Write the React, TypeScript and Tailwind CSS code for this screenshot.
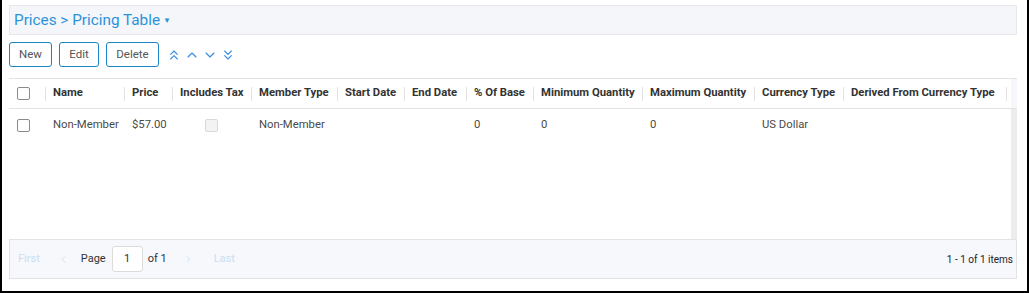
import { ChevronLeft, ChevronRight, ChevronUp, ChevronDown, ChevronsUp, ChevronsDown } from 'lucide-react';

const COLUMNS = [
  { key: 'name', label: 'Name', width: 'w-[79px]' },
  { key: 'price', label: 'Price', width: 'w-[48px]' },
  { key: 'tax', label: 'Includes Tax', width: 'w-[79px]' },
  { key: 'member', label: 'Member Type', width: 'w-[86px]' },
  { key: 'start', label: 'Start Date', width: 'w-[67px]' },
  { key: 'end', label: 'End Date', width: 'w-[62px]' },
  { key: 'base', label: '% Of Base', width: 'w-[67px]' },
  { key: 'min', label: 'Minimum Quantity', width: 'w-[109px]' },
  { key: 'max', label: 'Maximum Quantity', width: 'w-[112px]' },
  { key: 'currency', label: 'Currency Type', width: 'w-[89px]' },
  { key: 'derived', label: 'Derived From Currency Type', width: 'w-[164px]' },
];

const ROW: Record<string, string> = {
  name: 'Non-Member',
  price: '$57.00',
  tax: '',
  member: 'Non-Member',
  start: '',
  end: '',
  base: '0',
  min: '0',
  max: '0',
  currency: 'US Dollar',
  derived: '',
};

const BUTTONS = [
  { label: 'New', width: 'w-[43px]' },
  { label: 'Edit', width: 'w-[40px]' },
  { label: 'Delete', width: 'w-[53px]' },
];

function Checkbox({ disabled }: { disabled?: boolean }) {
  return (
    <span
      className={`block w-[13px] h-[13px] rounded-[2px] border ${
        disabled ? 'border-[#d9d9d9] bg-[#f3f3f3]' : 'border-[#8a8a8a] bg-white'
      }`}
    />
  );
}

export default function App() {
  return (
    <div className="w-[1029px] h-[293px] bg-white border-x-2 border-b-2 border-black pl-[7px] pr-[10px] pt-[5px] font-['Roboto',sans-serif] text-[11.3px] text-[#4a4a4a]">
      {/* Title bar */}
      <div className="h-[30px] flex items-center px-[4px] bg-[#f5f6fa] border border-[#e7e8ec]">
        <span className="text-[15.3px] text-[#2b93dc]">Prices &gt; Pricing Table</span>
        <span className="ml-[3px] mt-[1px] text-[8px] text-[#2b93dc]">▼</span>
      </div>

      {/* Toolbar */}
      <div className="mt-[7px] flex items-center gap-[7px]">
        {BUTTONS.map((b) => (
          <button
            key={b.label}
            className={`${b.width} h-[25px] rounded-[3px] border border-[#1b84c6] bg-white text-[11.5px] text-[#555]`}
          >
            {b.label}
          </button>
        ))}
        <div className="flex items-center gap-[2px] text-[#3b8fe2]">
          <ChevronsUp className="w-[16px] h-[16px]" strokeWidth={1.75} />
          <ChevronUp className="w-[16px] h-[16px]" strokeWidth={1.75} />
          <ChevronDown className="w-[16px] h-[16px]" strokeWidth={1.75} />
          <ChevronsDown className="w-[16px] h-[16px]" strokeWidth={1.75} />
        </div>
      </div>

      {/* Grid */}
      <div className="mt-[11px] border-t border-[#e3e3e3]">
        <div className="h-[30px] flex items-center border-b border-[#e3e3e3] font-bold text-[#333]">
          <div className="w-[36px] h-full flex items-center pl-[8px]">
            <Checkbox />
          </div>
          {COLUMNS.map((c, i) => (
            <div key={c.key} className={`${c.width} h-full flex items-center shrink-0`}>
              <span className="w-px h-[14px] bg-[#e3e3e3]" />
              <span className="pl-[7px] whitespace-nowrap">{c.label}</span>
              {i === COLUMNS.length - 1 && <span className="ml-auto w-px h-[14px] bg-[#e3e3e3]" />}
            </div>
          ))}
          <div className="ml-auto w-[6px] h-full bg-[#f5f7fa]" />
        </div>

        <div className="h-[130px] flex">
          <div className="flex-1">
            <div className="h-[32px] flex items-center">
              <div className="w-[36px] flex items-center pl-[8px]">
                <Checkbox />
              </div>
              {COLUMNS.map((c) => (
                <div key={c.key} className={`${c.width} shrink-0 flex items-center ${c.key === 'tax' ? 'justify-center' : 'pl-[8px]'}`}>
                  {c.key === 'tax' ? <Checkbox disabled /> : <span className="whitespace-nowrap">{ROW[c.key]}</span>}
                </div>
              ))}
            </div>
          </div>
          <div className="w-[6px] h-full bg-[#ececec]" />
        </div>
      </div>

      {/* Pager */}
      <div className="h-[40px] flex items-center bg-[#f6f8fc] border border-[#e3e3e3] text-[11px] text-[#333]">
        <span className="ml-[8px] text-[#c6e0f5]">First</span>
        <ChevronLeft className="ml-[18px] w-[11px] h-[11px] text-[#c6e0f5]" strokeWidth={2} />
        <span className="ml-[12px]">Page</span>
        <span className="ml-[6px] w-[31px] h-[26px] flex items-center justify-center bg-white border border-[#dcdcdc] rounded-[3px]">
          1
        </span>
        <span className="ml-[5px]">of 1</span>
        <ChevronRight className="ml-[16px] w-[11px] h-[11px] text-[#c6e0f5]" strokeWidth={2} />
        <span className="ml-[20px] text-[#c6e0f5]">Last</span>
        <span className="ml-auto mr-[3px] text-[10px] text-[#222]">1 - 1 of 1 items</span>
      </div>
    </div>
  );
}
